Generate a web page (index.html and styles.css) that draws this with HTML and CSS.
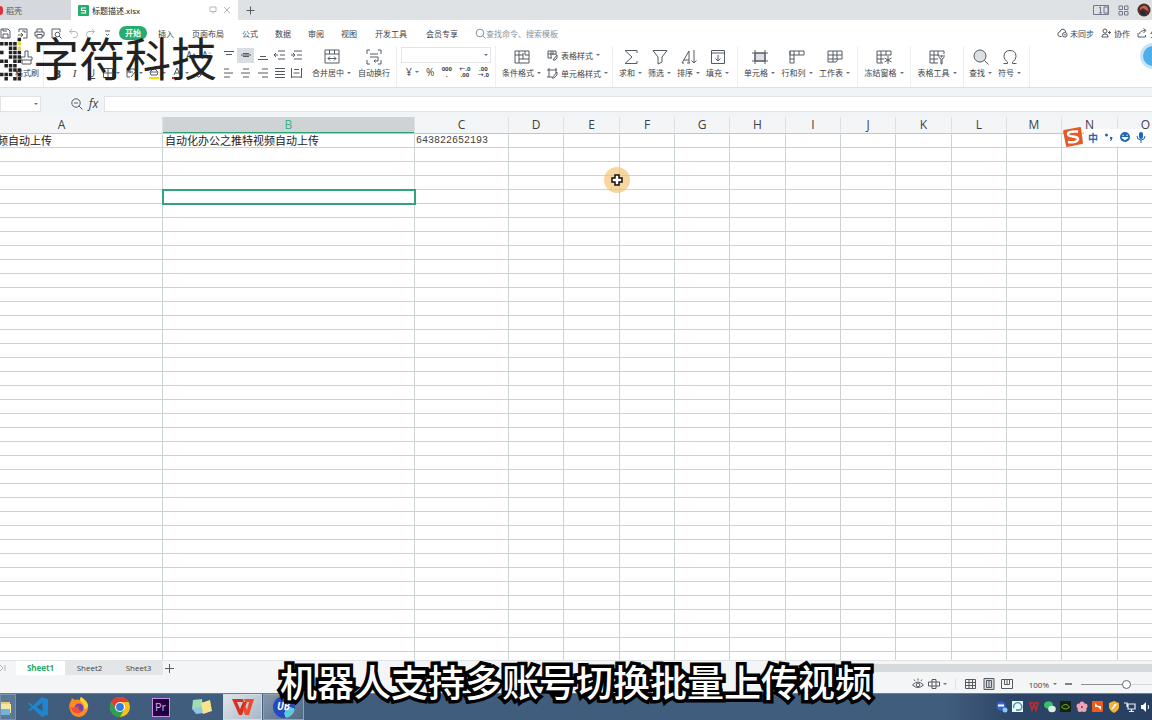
FILE: index.html
```html
<!DOCTYPE html>
<html lang="zh-CN">
<head>
<meta charset="utf-8">
<title>标题描述.xlsx</title>
<link rel="stylesheet" href="styles.css">
</head>
<body>
<div class="app">
  <header class="titlebar">
    <a class="doc-tab home" href="#"><span class="docer"></span>稻壳</a>
    <a class="doc-tab current" href="#"><svg width="11" height="11" viewBox="0 0 11 11"><rect width="11" height="11" rx="1" fill="#22ad6b"/><path d="M8 3H3.500V5.500H7.500V8H3" fill="none" stroke="#fff" stroke-width="1.200"/></svg><span class="doc-name">标题描述.xlsx</span>
      <svg class="ico faint" width="8" height="8" viewBox="0 0 8 8"><path d="M1 1h6v4.500H1zM3 7.500l1-1 1 1"/></svg>
      <svg class="ico faint" width="8" height="8" viewBox="0 0 8 8"><path d="M1 1l6 6M7 1L1 7"/></svg></a>
    <button class="plain new-tab" aria-label="新建"><svg class="ico" width="9" height="9" viewBox="0 0 9 9"><path d="M4.500 .5v8M.5 4.500h8"/></svg></button>
    <div class="window-tools">
      <svg class="ico violet" width="17" height="10" viewBox="0 0 17 10"><path d="M.5 .5h15v9H.5zM11 2h4v6h-4zM6 3l1.500-1v6M6 8h3"/></svg>
      <svg class="ico violet" width="11" height="11" viewBox="0 0 11 11"><path d="M1 1h3.500v3.500H1zM6.500 1H10v3.500H6.500zM1 6.500h3.500V10H1zM6.500 6.500H10V10H6.500z"/></svg>
      <svg width="14" height="14" viewBox="0 0 14 14"><circle cx="7" cy="7" r="6.500" fill="#54302c"/><path d="M3 5q4-4 7-1l2 4-3-1-3-2-3 2z" fill="#c56a50"/><path d="M3 9q3-3 5 0l1 3q-4 1-6-3z" fill="#222b40"/></svg>
    </div>
  </header>

  <nav class="menubar">
    <div class="quick">
      <button class="plain" aria-label="保存"><svg class="ico" width="11" height="11" viewBox="0 0 11 11"><path d="M1 1h7l2 2v7H1zM3 10V6h5v4M3 1v2h4"/></svg></button>
      <button class="plain" aria-label="输出"><svg class="ico" width="11" height="11" viewBox="0 0 11 11"><path d="M2 4V1h8v9H6M1 7h5M4 5l2 2-2 2M5 3h3v2"/></svg></button>
      <button class="plain" aria-label="打印"><svg class="ico" width="11" height="11" viewBox="0 0 11 11"><path d="M3 4V1h5v3M3 8H1V4h9v4H8M3 6.500h5V10H3z"/></svg></button>
      <button class="plain" aria-label="预览"><svg class="ico" width="11" height="11" viewBox="0 0 11 11"><path d="M4 10H1V1h8v3"/><circle cx="6.500" cy="6.500" r="2.300"/><path d="M8 8l2.500 2.500"/></svg></button>
      <button class="plain" aria-label="撤销"><svg class="ico faint" width="11" height="11" viewBox="0 0 11 11"><path d="M4 1L1.500 3.500 4 6M2 3.500h5q2.500 0 2.500 3T7 9.500H5"/></svg></button>
      <button class="plain" aria-label="恢复"><svg class="ico faint" width="11" height="11" viewBox="0 0 11 11"><path d="M7 1l2.500 2.500L7 6M9 3.500H4Q1.500 3.500 1.500 6.500T4 9.500h2"/></svg></button>
      <button class="plain" aria-label="更多"><svg class="ico" width="11" height="11" viewBox="0 0 11 11"><path d="M3 3h5M4 6l1.500 1.500L7 6"/></svg></button>
    </div>
    <a class="menu active" href="#">开始</a>
    <a class="menu" href="#">插入</a><a class="menu wide" href="#">页面布局</a><a class="menu" href="#">公式</a><a class="menu" href="#">数据</a><a class="menu" href="#">审阅</a><a class="menu" href="#">视图</a><a class="menu wide" href="#">开发工具</a><a class="menu wide" href="#">会员专享</a>
    <label class="find"><svg class="ico soft" width="11" height="11" viewBox="0 0 11 11"><circle cx="5" cy="5" r="3.800"/><path d="M8 8l2.500 2.500"/></svg><input type="text" placeholder="查找命令、搜索模板"></label>
    <div class="share">
      <a href="#"><svg class="ico" width="11" height="10" viewBox="0 0 11 10"><path d="M4.500 8.500H3Q.7 8.300.8 6 1 4.200 2.700 4 3.500 1 6 1.200 8.500 1.500 8.700 4.200"/><circle cx="7.800" cy="6.800" r="2.300"/><path d="M6.800 6.800h2"/></svg>未同步</a>
      <a href="#"><svg class="ico" width="11" height="10" viewBox="0 0 11 10"><circle cx="4" cy="3" r="2"/><path d="M.8 9q0-3 3.200-3t3.200 3zM7 4.500h3M8.500 3v3"/></svg>协作</a>
      <a href="#"><svg class="ico" width="11" height="10" viewBox="0 0 11 10"><path d="M1 5v4h7.500V7M2.500 6Q3 2.500 8 2.500M6.500 .5L9 2.500 6.500 5"/></svg>分享</a>
    </div>
  </nav>

  <section class="ribbon">
    <div class="group brush">
      <button class="big"><svg class="ico" width="16" height="16" viewBox="0 0 16 16"><path d="M6 2h3v6h4v3H2V8h4zM3 11v4h9v-4"/></svg><span>格式刷</span></button>
    </div>
    <div class="group fonts">
      <div class="row sizes"><span class="serif">A⁺</span><span class="serif">A⁻</span></div>
      <div class="row">
        <button class="plain b">B</button><button class="plain i">I</button><button class="plain u">U</button>
        <button class="plain"><svg class="ico" width="10" height="10" viewBox="0 0 10 10"><path d="M.5 .5h9v9h-9zM5 .5v9M.5 5h9"/></svg><i class="caret"></i></button>
        <button class="plain"><svg class="ico" width="10" height="10" viewBox="0 0 10 10"><path d="M9 3V1H1v8h3M1 4h6M4 1v4M5 9l4-5"/></svg><i class="caret"></i></button>
        <button class="plain"><svg class="ico" width="10" height="12" viewBox="0 0 10 12"><path d="M1 5l4-4 4 4-1 3H2zM1 5h7"/><path d="M0 11h10" stroke="#e8e800" stroke-width="2"/></svg><i class="caret"></i></button>
        <button class="plain"><svg class="ico" width="10" height="12" viewBox="0 0 10 12"><path d="M2 8l3-7 3 7M3 6h4"/><path d="M0 11h10" stroke="#d22" stroke-width="2"/></svg><i class="caret"></i></button>
        <button class="plain"><svg class="ico" width="10" height="10" viewBox="0 0 10 10"><path d="M1 6l5-5 3 3-5 5H3zM3 4l3 3"/></svg></button>
      </div>
    </div>
    <div class="group align">
      <div class="align-grid">
        <button class="plain"><svg class="ico" width="10" height="10" viewBox="0 0 10 10"><path d="M0 1.500h10M2 4.500h6"/></svg></button>
        <button class="plain on"><svg class="ico" width="10" height="10" viewBox="0 0 10 10"><path d="M0 5h10M2 3.500h6M2 6.500h6"/></svg></button>
        <button class="plain"><svg class="ico" width="10" height="10" viewBox="0 0 10 10"><path d="M2 6.500h6M0 9.500h10"/></svg></button>
        <button class="plain"><svg class="ico" width="11" height="10" viewBox="0 0 11 10"><path d="M4 1h7M6 5h5M4 9h7M4 5H0M2 3L0 5l2 2"/></svg></button>
        <button class="plain"><svg class="ico" width="11" height="10" viewBox="0 0 11 10"><path d="M3 1h8M6 5h5M3 9h8M0 5h4M2 3l2 2-2 2"/></svg></button>
        <button class="plain"><svg class="ico" width="10" height="10" viewBox="0 0 10 10"><path d="M0 1h5M0 5h9M0 9h6"/></svg></button>
        <button class="plain"><svg class="ico" width="10" height="10" viewBox="0 0 10 10"><path d="M2 1h6M0 5h9M2 9h6"/></svg></button>
        <button class="plain"><svg class="ico" width="10" height="10" viewBox="0 0 10 10"><path d="M4 1h6M0 5h10M4 9h6"/></svg></button>
        <button class="plain"><svg class="ico" width="10" height="10" viewBox="0 0 10 10"><path d="M0 .5h10M0 3.500h10M0 6.500h10M0 9.500h10"/></svg></button>
        <button class="plain"><svg class="ico" width="11" height="10" viewBox="0 0 11 10"><path d="M.5 0v10M10.500 0v10M3 1.500h5M.5 9h10M2.500 5h6"/></svg></button>
      </div>
      <button class="big"><svg class="ico" width="16" height="16" viewBox="0 0 16 16"><path d="M1 1h14v13H1zM1 5h14M5.500 1v4M10.500 1v4M4 9.500h8M6 7.500l-2 2 2 2M10 7.500l2 2-2 2"/></svg><span>合并居中<i class="caret"></i></span></button>
      <button class="big"><svg class="ico" width="16" height="16" viewBox="0 0 16 16"><path d="M4 1H1v4M12 1h3v4M4 15H1v-4M12 15h3v-4M4 5h8M4 8h8v4H8M9.500 10.500L8 12l1.500 1.500"/></svg><span>自动换行</span></button>
    </div>
    <div class="group number">
      <select aria-label="数字格式"><option></option></select><i class="caret over"></i>
      <div class="row figures"><button class="plain">¥<i class="caret"></i></button><button class="plain">%</button><button class="plain tiny">000<br>,</button><button class="plain tiny">←.0<br>.00</button><button class="plain tiny">.00<br>→.0</button></div>
    </div>
    <div class="group styles">
      <button class="big"><svg class="ico" width="16" height="16" viewBox="0 0 16 16"><path d="M1 2h14v12H1zM1 6h8M5 2v12M5 10h10M9 4v6M11 6h4M11 2v4"/></svg><span>条件格式<i class="caret"></i></span></button>
      <div class="stack">
        <button class="line"><svg class="ico" width="11" height="11" viewBox="0 0 11 11"><path d="M1 1h8v4M1 1v7h4M1 4h8M4 1v7M6 1v4M6 10l4-5v3l-2 2z"/></svg>表格样式<i class="caret"></i></button>
        <button class="line"><svg class="ico" width="11" height="11" viewBox="0 0 11 11"><path d="M2 0v9M0 2h10M5 9H0M9 0v5M5 10l5-6v3l-3 3z"/></svg>单元格样式<i class="caret"></i></button>
      </div>
    </div>
    <div class="group edit">
      <button class="big"><svg class="ico" width="16" height="16" viewBox="0 0 16 16"><path d="M14 4V1.500H2L9 8l-7 6.500h12V12"/></svg><span>求和<i class="caret"></i></span></button>
      <button class="big"><svg class="ico" width="16" height="16" viewBox="0 0 16 16"><path d="M1 1.500h14L10 8v5l-4 2V8z"/></svg><span>筛选<i class="caret"></i></span></button>
      <button class="big"><svg class="ico" width="16" height="16" viewBox="0 0 16 16"><path d="M1 14L8 2v12M3 11h5M1 14h2M6 14h3M13 1v13M10.500 11.500L13 14l2.500-2.500"/></svg><span>排序<i class="caret"></i></span></button>
      <button class="big"><svg class="ico" width="16" height="16" viewBox="0 0 16 16"><path d="M1.500 1.500h13v13h-13zM1.500 4h13M8 6v6M5.500 9.500L8 12l2.500-2.500"/></svg><span>填充<i class="caret"></i></span></button>
    </div>
    <div class="group cells">
      <button class="big"><svg class="ico" width="16" height="16" viewBox="0 0 16 16"><path d="M3 4h10v8H3z" fill="#dcdfe4"/><path d="M3 1v14M13 1v14M0 4h16M0 12h16"/></svg><span>单元格<i class="caret"></i></span></button>
      <button class="big"><svg class="ico" width="16" height="16" viewBox="0 0 16 16"><path d="M1 2h14v4H1zM1 2v12h4V2M10 2v4M1 10h4"/></svg><span>行和列<i class="caret"></i></span></button>
      <button class="big"><svg class="ico" width="16" height="16" viewBox="0 0 16 16"><path d="M1 2h14v8H1zM1 6h14M6 2v11M10 2v8M1 10v3h8l2-3"/></svg><span>工作表<i class="caret"></i></span></button>
    </div>
    <div class="group freeze">
      <button class="big"><svg class="ico" width="16" height="16" viewBox="0 0 16 16"><path d="M1 2h14v4M1 2v12h6M1 6h14M5 2v12M10 2v4M1 10h7M12 7v8M8.500 9l7 4M15.500 9l-7 4"/></svg><span>冻结窗格<i class="caret"></i></span></button>
    </div>
    <div class="group freeze">
      <button class="big"><svg class="ico" width="16" height="16" viewBox="0 0 16 16"><path d="M1 2h14v3M1 2v12h8M1 6h9M1 10h8M5 2v12M9 2v5M10 6q-1 3 2 4v5h1v-5q3-1 2-4M12 6v2h1V6"/></svg><span>表格工具<i class="caret"></i></span></button>
    </div>
    <div class="group search">
      <button class="big"><svg class="ico" width="16" height="16" viewBox="0 0 16 16"><circle cx="7" cy="7" r="6" fill="#dcdfe4"/><path d="M11.500 11.500l4 4"/></svg><span>查找<i class="caret"></i></span></button>
      <button class="big"><svg class="ico" width="16" height="16" viewBox="0 0 16 16"><path d="M1.500 14.500h4V13Q2 11 2 7.500 2 1.500 8 1.500t6 6Q14 11 10.500 13v1.500h4"/></svg><span>符号<i class="caret"></i></span></button>
    </div>
  </section>

  <section class="formula">
    <label class="namebox"><input type="text" aria-label="名称框"><i class="caret"></i></label>
    <svg class="ico" width="12" height="12" viewBox="0 0 12 12"><circle cx="5" cy="5" r="4.200"/><path d="M8 8l3.500 3.500M3 5h4"/></svg>
    <span class="fx">fx</span>
    <input class="entry" type="text" aria-label="编辑栏">
  </section>

  <main class="sheet">
    <table class="grid" id="grid">
      <colgroup><col class="ca"><col class="cb"><col class="cc"><col class="cd"><col class="ce"><col class="cd"><col class="cd"><col class="ce"><col class="cd"><col class="cd"><col class="ce"><col class="cd"><col class="cd"><col class="ce"><col class="ce"></colgroup>
      <thead><tr><th class="first">A</th><th class="picked">B</th><th>C</th><th>D</th><th>E</th><th>F</th><th>G</th><th>H</th><th>I</th><th>J</th><th>K</th><th>L</th><th>M</th><th>N</th><th>O</th></tr></thead>
      <tbody><tr><td class="cut">频自动上传</td><td>自动化办公之推特视频自动上传</td><td class="num">643822652193</td><td></td><td></td><td></td><td></td><td></td><td></td><td></td><td></td><td></td><td></td><td></td><td></td></tr></tbody>
    </table>
    <svg class="pointer" width="26" height="26" viewBox="0 0 26 26"><circle cx="13" cy="13" r="13" fill="#f5c06c" fill-opacity=".65"/><path d="M11 8h4v3h3v4h-3v3h-4v-3H8v-4h3z" fill="#fff" stroke="#111" stroke-width="1.500"/></svg>
    <div class="ime">
      <svg width="22" height="22" viewBox="0 0 22 22"><path d="M2 4L18 1q1 0 1 1l2 15q0 1-1 1L5 21q-1 0-1-1L1 5z" fill="#e45a28"/><path d="M16 5.500Q6 5 6 8q0 2 5 2.500t5 3Q15 17 6 16" fill="none" stroke="#fff" stroke-width="2.500"/></svg>
      <b>中</b>
      <svg width="10" height="10" viewBox="0 0 10 10" fill="#1d68b8"><circle cx="2.500" cy="3" r="1.500"/><path d="M6 5h2.500q0 3-2 4l-.5-.6q1-.7.8-1.400H6z"/></svg>
      <svg width="10" height="10" viewBox="0 0 10 10"><circle cx="5" cy="5" r="5" fill="#1d68b8"/><path d="M3 2.500v1.500M7 2.500v1.500M2 5.500q3 4 6 0z" stroke="#fff" fill="#fff"/></svg>
      <svg width="10" height="11" viewBox="0 0 10 11"><rect x="3" width="4" height="7" rx="2" fill="#1d68b8"/><path d="M1 4q0 4 4 4t4-4M5 8v3" fill="none" stroke="#1d68b8"/></svg>
    </div>
  </main>

  <nav class="sheets">
    <svg class="ico faint" width="8" height="8" viewBox="0 0 8 8"><path d="M0 1l3 3-3 3M5 1v6"/></svg>
    <a class="sheet-tab current" href="#">Sheet1</a><a class="sheet-tab" href="#">Sheet2</a><a class="sheet-tab" href="#">Sheet3</a>
    <button class="plain add" aria-label="新建工作表"><svg class="ico" width="9" height="9" viewBox="0 0 9 9"><path d="M4.500 0v9M0 4.500h9"/></svg></button>
    <div class="hscroll"></div>
  </nav>

  <footer class="status">
    <svg class="ico" width="12" height="12" viewBox="0 0 12 12"><path d="M.5 7q5.500-6 11 0-5.500 5-11 0M6 .5v2M2 1.500l1 1.500M10 1.500L9 3"/><circle cx="6" cy="7" r="1.800"/></svg>
    <span class="pair"><svg class="ico" width="12" height="12" viewBox="0 0 12 12"><path d="M4 1.500h4v9H4zM.5 4h11v4H.5z"/></svg><i class="caret"></i></span>
    <span class="views">
      <svg class="ico" width="12" height="10" viewBox="0 0 12 10"><path d="M.5 .5h10v9H.5zM.5 3.500h10M.5 6.500h10M4 .5v9M7.500 .5v9"/></svg>
      <svg class="ico" width="12" height="12" viewBox="0 0 12 12"><path d="M1 .5h10v11H1z" fill="#d5d8dc"/><path d="M3.500 2.500h5v7h-5zM6 2.500v7"/></svg>
      <svg class="ico" width="12" height="10" viewBox="0 0 12 10"><path d="M.5 .5h11v9H.5zM3.500 .5v5h5v-5M6 .5v5"/></svg>
    </span>
    <span class="zoom">100%<i class="caret"></i></span>
    <svg class="ico dash" width="7" height="8" viewBox="0 0 7 8"><path d="M0 4h7" stroke-width="1.500"/></svg>
    <input class="slider" type="range" min="0" max="100" value="50" aria-label="缩放">
  </footer>

  <footer class="taskbar">
    <button class="task edge" aria-label="文件管理器"><svg width="22" height="22" viewBox="0 0 22 22"><path d="M1 4h7l2 2h10v13H1z" fill="#e9cb73"/><path d="M3 8h18v9H3z" fill="#f8e7a4"/><path d="M8 13h12v6H8z" fill="#6fb4dc"/></svg></button>
    <button class="task" aria-label="VS Code"><svg width="22" height="22" viewBox="0 0 22 22"><path d="M15 1l6 2.500v15L15 21 6 12.500 2.500 15.500 1 14.500 4.500 11 1 7.500 2.500 6.500 6 9.500z" fill="#1f85cf"/><path d="M15.500 6.500v9L9.500 11z" fill="#3f5b7b"/></svg></button>
    <button class="task" aria-label="Firefox"><svg width="22" height="22" viewBox="0 0 22 22"><path d="M3 5l1-3 3 2q3-1 5 0l1-3q4 2 6 5 2 3 1 7-2 7-9 8-7 0-9-7Q0 9 3 5z" fill="#ff8b1e"/><path d="M13 1q6 4 7 9-1 3-4 3 1-4-3-7-2-3 0-5z" fill="#ffd23a"/><circle cx="11" cy="12" r="4.500" fill="#7142c0"/><path d="M2 11q3 1 6 0l3-1q-2 4 3 5-4 4-9 1z" fill="#f0503a"/></svg></button>
    <button class="task" aria-label="Chrome"><svg width="22" height="22" viewBox="0 0 22 22"><circle cx="11" cy="11" r="10" fill="#fbc116"/><path d="M2.300 6A10 10 0 0 1 19.700 6H11L6.700 13.500z" fill="#e33b2e"/><path d="M2.300 6A10 10 0 0 0 11 21l4.300-7.500H6.700z" fill="#2da04e"/><circle cx="11" cy="11" r="5" fill="#fff"/><circle cx="11" cy="11" r="3.900" fill="#2f7de1"/></svg></button>
    <button class="task"><span class="pr">Pr</span></button>
    <button class="task" aria-label="便笺"><svg width="22" height="20" viewBox="0 0 22 20"><path d="M2 3l9-1 1 11-8 2L1 12z" fill="#9fdcae"/><path d="M1 11l10-1 2 6-8 1z" fill="#8ec5e4"/><path d="M10 6l9-3 2 11-9 3z" fill="#f6e58b"/></svg></button>
    <button class="task lit" aria-label="WPS"><svg width="22" height="20" viewBox="0 0 22 20"><path d="M0 2h11l1 3H5l3 7 3-7h4l-5 13H7z" fill="#d9301f"/><path d="M12 2h10l-5 16h-4l-2-6 2-4 2 5 2-8h-4z" fill="#ef4b2b"/></svg></button>
    <button class="task open"><span class="ub">UB</span></button>
    <div class="tray">
      <svg width="12" height="12" viewBox="0 0 12 12"><circle cx="5" cy="5" r="4.500" fill="#3463d8"/><path d="M2 4.500h6" stroke="#fff" stroke-width="2"/><circle cx="9" cy="9" r="2.500" fill="#8fc7f0"/></svg>
      <svg width="12" height="12" viewBox="0 0 12 12"><rect width="11" height="11" fill="#eef7f8"/><path d="M2 7a4 4 0 1 1 6 2L4 9" fill="none" stroke="#3592a8" stroke-width="1.300"/></svg>
      <svg width="12" height="12" viewBox="0 0 12 12"><path d="M1 2h4M2 2l2 7 2-6 2 6 2-7H6" fill="none" stroke="#c92a2c" stroke-width="1.500"/></svg>
      <svg width="12" height="12" viewBox="0 0 12 12"><ellipse cx="4.500" cy="4" rx="4.500" ry="3.800" fill="#35bf66"/><ellipse cx="8" cy="8" rx="3.800" ry="3.200" fill="#d9eee1"/></svg>
      <svg width="12" height="12" viewBox="0 0 12 12"><rect width="11" height="11" fill="#14230f"/><path d="M1.500 6q4-5 8 0-4 4-8 0z" fill="none" stroke="#79b52e"/></svg>
      <svg width="12" height="12" viewBox="0 0 12 12" fill="#efa4b6"><circle cx="6" cy="3" r="2.500"/><circle cx="3" cy="5" r="2.500"/><circle cx="9" cy="5" r="2.500"/><circle cx="4" cy="8.500" r="2.500"/><circle cx="8" cy="8.500" r="2.500"/><circle cx="6" cy="6" r="1" fill="#a8405c"/></svg>
      <svg width="12" height="12" viewBox="0 0 12 12"><rect width="11" height="11" rx="1" fill="#ee5b1a"/><path d="M3 2l3 3h3v4L6 6H3z" fill="#fff"/></svg>
      <svg width="12" height="12" viewBox="0 0 12 12"><path d="M6 0l5 2v5q-1 3-5 5-4-2-5-5V2z" fill="#f2b234"/><path d="M8 3L4 8" stroke="#fff" stroke-width="2"/></svg>
      <svg width="12" height="12" viewBox="0 0 12 12"><path d="M4 3h7v5H4zM5 10.500h5M7.500 8v2M0 2h3v4" fill="none" stroke="#e8eef4" stroke-width="1.200"/></svg>
      <svg width="12" height="12" viewBox="0 0 12 12"><path d="M1 4h2l3-3v10L3 8H1z" fill="#fff"/><path d="M8 4q1.500 2 0 4" fill="none" stroke="#fff"/></svg>
    </div>
  </footer>

  <div class="bubble"></div>
  <div class="watermark">
    <svg width="22" height="46" viewBox="0 0 50 105" fill="none" stroke="#222" stroke-width="8"><path d="M40 10h8M0 20h8M10 20h8M20 20h8M30 20h8M20 30h8M30 30h8M40 40h8M0 40h8M20 40h8M30 40h8M20 50h8M30 50h8M40 50h8M0 60h8M10 60h8M30 60h8M40 60h8M10 70h8M20 70h8M30 70h8M20 80h8M30 80h8M40 80h8M0 90h8M10 90h8M20 90h8M40 90h8M10 100h8M30 100h8M40 100h8"/><path d="M40 20h8M40 30h8" stroke="#ead84a"/></svg>
    <span>字符科技</span>
  </div>
  <p class="caption">机器人支持多账号切换批量上传视频</p>
</div>
<script src="grid.js"></script>
</body>
</html>
```
FILE: styles.css
```css
* { box-sizing: border-box; }
body { margin: 0; font-family: "Open Sans", "Noto Sans CJK SC", sans-serif; font-size: 8px; color: #3c4148; }
a { color: inherit; text-decoration: none; }
button, input, select { font: inherit; color: inherit; border: 0; padding: 0; background: none; border-radius: 0; }
svg { flex: none; display: block; }
.app { position: relative; height: 100vh; display: flex; flex-direction: column; overflow: hidden; background: #f3f5f7; white-space: nowrap; }
.ico { fill: none; stroke: #555b63; stroke-width: 1; }
.faint { stroke: #b2b7bd; }
.soft { stroke: #888f98; }
.violet { stroke: #73778d; }
.plain { display: flex; align-items: center; justify-content: center; gap: 3px; }
.caret { flex: none; display: inline-block; border: 2px solid transparent; border-top-color: #6d737b; border-bottom: 0; vertical-align: middle; }

.titlebar { flex: none; display: flex; height: 20px; background: #dfe2e4; }
.doc-tab { display: flex; align-items: center; gap: 6px; }
.home { width: 71px; background: #d5d8dc; color: #555; gap: 3px; }
.docer { width: 3px; height: 9px; background: #dc3341; border-radius: 0 5px 5px 0; }
.current.doc-tab { width: 167px; padding: 0 7px; background: #fff; gap: 3px; color: #222; }
.doc-name { flex: 1; }
.doc-tab .faint { margin-left: 3px; }
.new-tab { width: 24px; }
.window-tools { margin-left: auto; display: flex; align-items: center; gap: 8px; padding-right: 1px; }

.menubar { flex: none; display: flex; align-items: center; height: 26px; background: #fff; }
.quick { display: flex; gap: 6px; width: 119px; }
.menu { margin-left: 17px; }
.menu.wide { padding: 0 1px; }
.menu.active { margin: 0 -6px 0 0; padding: 0 6px; line-height: 14px; border-radius: 7px; background: #26ac6e; color: #fff; font-weight: bold; }
.find { display: flex; align-items: center; margin-left: 16px; }
.find input { width: 80px; }
.find input::placeholder { color: #8c929a; opacity: 1; }
.share { display: flex; gap: 7px; margin-left: auto; margin-right: -14px; }
.share a { display: flex; align-items: center; gap: 2px; }

.ribbon { flex: none; display: flex; height: 42px; background: #fff; border-bottom: 1px solid #dde1e5; }
.group { position: relative; flex: none; display: flex; border-right: 1px solid #edf0f2; }
.row { display: flex; align-items: center; height: 18px; }
.big { display: flex; flex-direction: column; align-items: center; padding-top: 3px; }
.big span { display: flex; align-items: center; gap: 3px; line-height: 16px; }
.brush { width: 44px; justify-content: flex-end; padding-right: 4px; }
.fonts { width: 172px; flex-direction: column; padding: 0 0 0 8px; border: 0; }
.fonts .row { gap: 6px; }
.fonts .sizes { justify-content: flex-end; padding-right: 5px; }
.serif { font-size: 10px; }
.b, .i, .u { width: 11px; }
.b { font-size: 11px; font-weight: bold; }
.i { font: italic 11px "Liberation Serif", serif; }
.u { font-size: 10px; text-decoration: underline; }
.align { width: 181px; padding-left: 4px; gap: 7px; }
.align-grid { display: grid; grid-template-columns: repeat(5, 17px); grid-auto-rows: 18px; align-items: center; }
.on { background: #d9dde4; height: 15px; }
.number { width: 99px; flex-direction: column; padding: 1px 4px 0; }
.number select { height: 16px; border: 1px solid #e1e4e8; appearance: none; }
.over { position: absolute; top: 8px; right: 7px; }
.figures { justify-content: space-between; padding: 0 2px 0 5px; font-size: 10px; }
.tiny { display: block; font-size: 6px; line-height: 6px; font-weight: bold; }
.styles { width: 117px; padding-left: 6px; gap: 6px; }
.stack { display: flex; flex-direction: column; }
.line { display: flex; align-items: center; gap: 3px; height: 18px; }
.edit { width: 125px; justify-content: space-between; padding: 0 8px 0 6px; }
.cells { width: 120px; justify-content: space-between; padding: 0 7px 0 6px; }
.freeze { width: 53px; justify-content: center; }
.search { width: 66px; justify-content: space-between; padding: 0 8px 0 5px; }

.formula { flex: none; display: flex; align-items: center; height: 29px; padding: 2px 0 0; background: #f1f4f6; }
.namebox { display: flex; align-items: center; width: 41px; height: 16px; padding-right: 2px; margin-right: 30px; background: #fff; border: 1px solid #e0e3e7; }
.namebox input { flex: 1; min-width: 0; }
.fx { width: 21px; text-align: center; font: italic 12px "Open Sans", sans-serif; }
.entry { flex: 1; height: 16px; background: #fff; border: 1px solid #e0e3e7; border-right: 0; }

.sheet { position: relative; flex: 1; min-height: 0; overflow: hidden; background: #fff; }
.grid { table-layout: fixed; width: 1px; border-collapse: separate; border-spacing: 0; }
.ca { width: 163px; }
.cb { width: 252px; }
.cc { width: 94px; }
.cd { width: 55px; }
.ce { width: 56px; }
.grid th { height: 17px; padding: 0; background: #f3f5f7; border-right: 1px solid #dde1e5; border-bottom: 1px solid #bfc6ca; font: 12px/16px "Open Sans", sans-serif; }
.grid .first { padding-right: 39px; }
.grid .picked { background: #cfd3d6; color: #36b582; box-shadow: inset 0 -1px #2ba172; }
.grid td { height: 14px; padding: 0 0 0 2px; border-right: 1px solid #ccd3d6; border-bottom: 1px solid #ccd3d6; font: 11px/13px "Noto Sans CJK SC", sans-serif; color: #222; }
.grid .cut { padding: 0; text-indent: -3px; }
.grid .num { padding-left: 1px; font: 10px/13px "Liberation Mono", monospace; color: #444; }
.grid .chosen { outline: 2px solid #35a37a; position: relative; outline-offset: -1px; }
.pointer { position: absolute; left: 604px; top: 50px; }
.ime { position: absolute; right: 0; top: 9px; display: flex; align-items: center; gap: 6px; height: 22px; padding-right: 6px; color: #1d68b8; font-size: 10px; background: linear-gradient(#fff, #fff) right / 68px 17px no-repeat; }
.ime b { margin-left: -2px; }

.sheets { flex: none; display: flex; align-items: center; height: 15px; border-top: 1px solid #e1e4e7; }
.sheets > .faint { margin-right: 8px; }
.sheet-tab { width: 49px; line-height: 14px; text-align: center; background: #e3e6e9; }
.sheet-tab.current { background: #fff; color: #25a96c; font-weight: bold; }
.add { margin-left: 2px; }
.hscroll { flex: 1; height: 8px; margin-left: 686px; background: #d7dadd; }

.status { flex: none; display: flex; align-items: center; justify-content: flex-end; height: 18px; }
.pair { display: flex; align-items: center; gap: 3px; margin-left: 4px; padding-right: 8px; border-right: 1px solid #e1e4e7; }
.views { display: flex; align-items: center; gap: 6px; margin-left: 9px; }
.zoom { display: flex; align-items: center; gap: 4px; margin-left: 16px; }
.dash { margin: 0 9px 0 8px; }
.slider { appearance: none; width: 91px; height: 10px; margin: 0 -20px 0 0; background: linear-gradient(#8d9299, #8d9299) left / 50% 1px no-repeat, linear-gradient(#d9dcdf, #d9dcdf) center / 100% 1px no-repeat; }
.slider::-webkit-slider-thumb { appearance: none; width: 9px; height: 9px; border: 1px solid #666; border-radius: 50%; background: #fff; }

.taskbar { flex: none; display: flex; height: 27px; background: linear-gradient(90deg, #415d7d 82%, #2c4567 88%, #273f60); border-top: 1px solid #6d7f91; }
.task { width: 41px; display: flex; align-items: center; justify-content: center; }
.edge { width: 16px; justify-content: flex-end; margin-right: 1px; padding-right: 3px; border: 1px solid #7991a8; overflow: hidden; background: #5b7896; }
.lit { margin: 0 1px; width: 39px; background: linear-gradient(135deg, #dfe5ea, #a9b7c7); border: 1px solid #d3dce4; }
.open { width: 41px; background: linear-gradient(135deg, #8798aa, #4e6885); border: 1px solid #8fa2b5; }
.pr { width: 18px; height: 19px; line-height: 16px; font-size: 11px; background: #23003c; border: 1px solid #cf8cf0; color: #e3a5fb; }
.ub { width: 22px; height: 22px; line-height: 20px; border-radius: 50%; background: radial-gradient(circle at 80% 80%, #5dc9dc 24%, #2549be 26%); color: #fff; font-size: 10px; font-weight: bold; font-style: italic; }
.tray { display: flex; align-items: center; gap: 4px; margin-left: auto; }

.bubble { position: absolute; right: -14px; top: 43px; width: 26px; height: 26px; border-radius: 50%; background: #4eaeea; border: 3px solid #c5e4f7; }
.watermark { position: absolute; left: 0; top: 34px; display: flex; align-items: center; gap: 11px; height: 48px; font-family: "Noto Sans CJK SC", sans-serif; font-size: 46px; line-height: 48px; color: #222; pointer-events: none; }
.watermark span { padding-bottom: 4px; }
.caption { position: absolute; left: 0; right: 0; bottom: 17px; margin: 0; text-align: center; font: 500 37px/44px "Noto Sans CJK SC", sans-serif; color: #fff; -webkit-text-stroke: 7px #000; paint-order: stroke fill; stroke-linejoin: round; pointer-events: none; }
```
FILE: grid.js
```js
const table = document.getElementById('grid');
const columns = table.tHead.rows[0].cells.length;
const body = table.tBodies[0];
for (let r = 2; r <= 80; r++) {
  const row = body.insertRow();
  for (let c = 0; c < columns; c++) {
    const cell = row.insertCell();
    if (r === 5 && c === 1) cell.className = 'chosen';
  }
}
```
